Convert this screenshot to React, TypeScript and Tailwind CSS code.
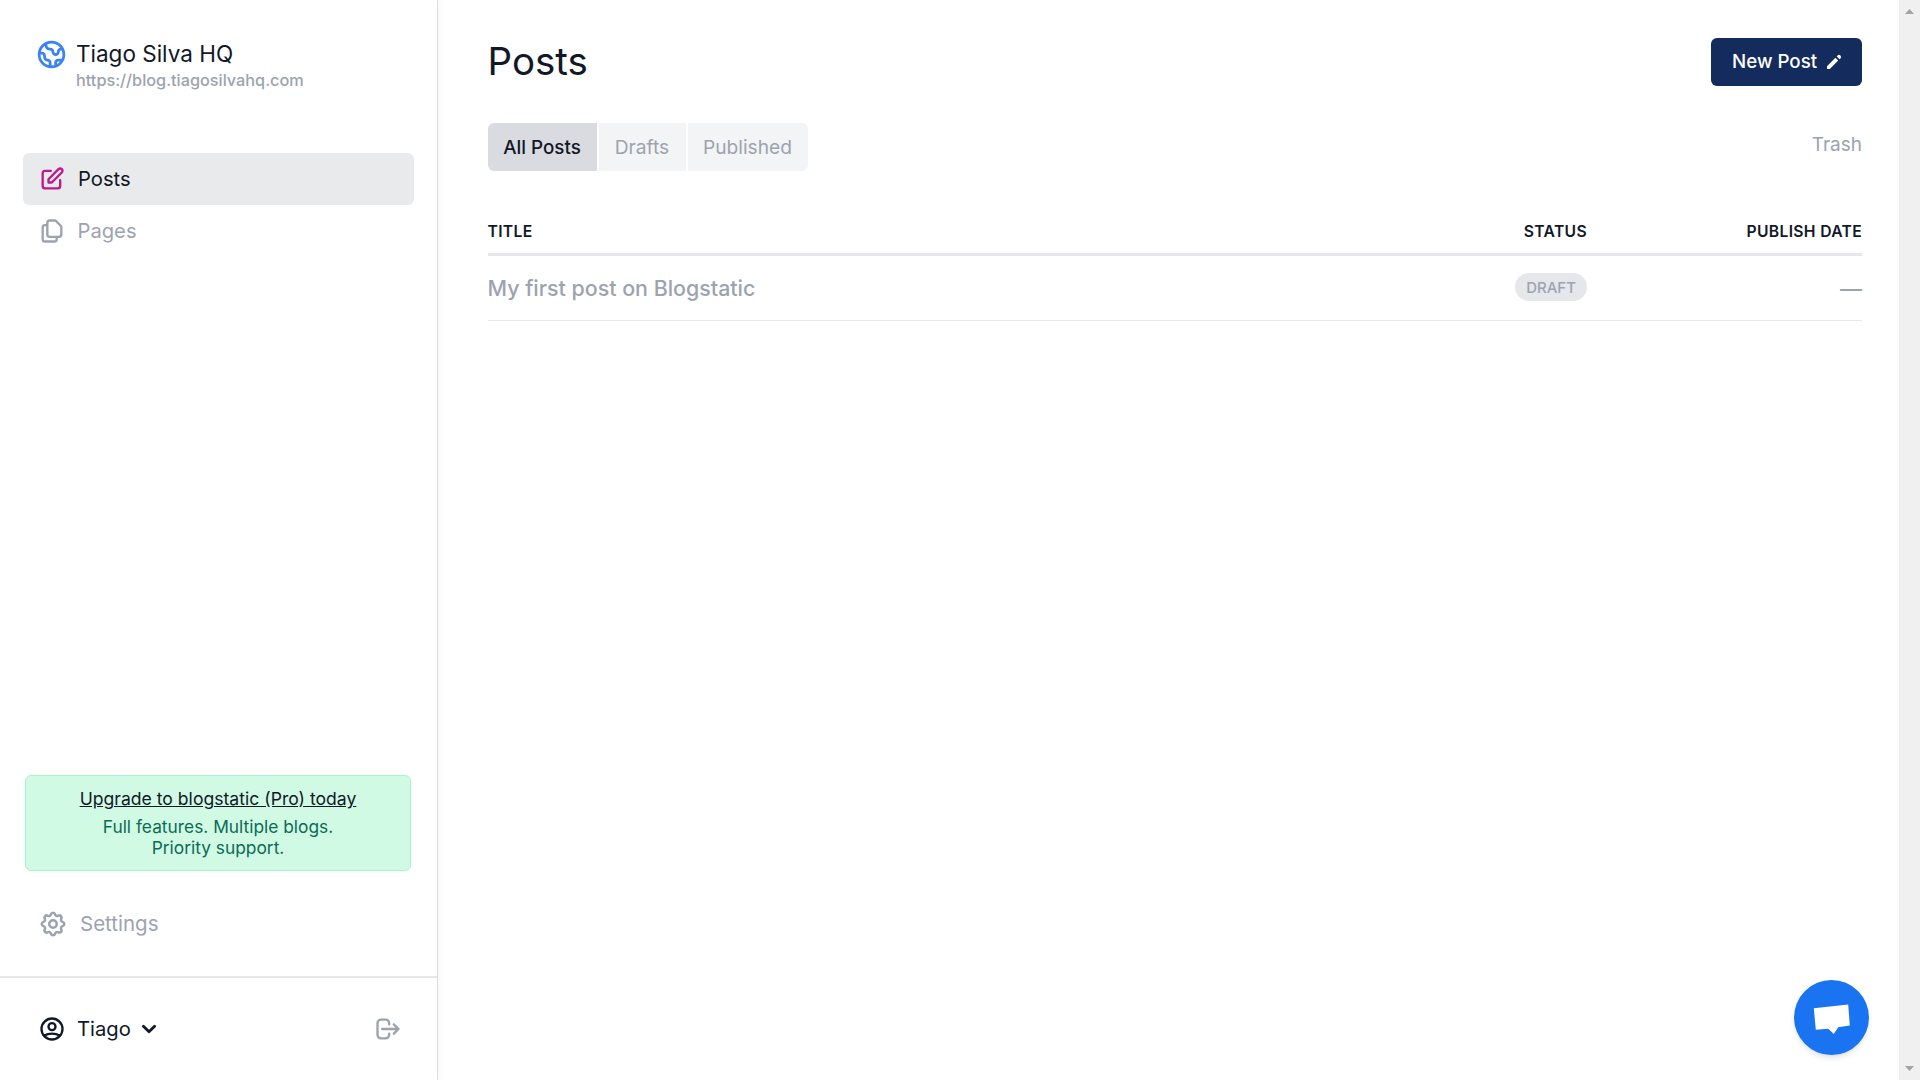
import { HiOutlineGlobe, HiOutlinePencilAlt, HiOutlineDocumentDuplicate, HiOutlineCog, HiOutlineUserCircle, HiOutlineLogout, HiChevronDown, HiPencil } from 'react-icons/hi';

const Sidebar = () => (
  <aside className="w-[438px] shrink-0 h-full flex flex-col border-r border-[#d9dbdf] shadow-[2px_0_6px_rgba(0,0,0,0.03)]">
    <div className="flex items-start pl-[35px] pt-[38px] h-[153px]">
      <HiOutlineGlobe size={33} className="text-[#3b82f6] shrink-0" />
      <div className="ml-[8px]">
        <div className="text-[22.5px] leading-[32px] text-[#111827]">Tiago Silva HQ</div>
        <div className="text-[16.25px] leading-[20px] font-medium text-[#9ca3af]">https://blog.tiagosilvahq.com</div>
      </div>
    </div>

    <nav className="pl-[23px] pr-[23px]">
      <a className="flex items-center h-[52px] pl-[15px] rounded-md bg-[#e9eaec] text-[#111827]">
        <HiOutlinePencilAlt size={28} className="text-[#be1a8f]" />
        <span className="ml-[12px] text-[20.2px]">Posts</span>
      </a>
      <a className="flex items-center h-[52px] pl-[15px] text-[#9ca3af]">
        <HiOutlineDocumentDuplicate size={28} />
        <span className="ml-[11.5px] text-[20.2px]">Pages</span>
      </a>
    </nav>

    <div className="flex-1" />

    <div className="ml-[25px] mr-[26px] h-[96px] rounded-md border border-[#a7f3d0] bg-[#d1fae5] text-center text-[17.6px] leading-[21px] pt-[12px]">
      <a className="underline text-[#111827]">Upgrade to blogstatic (Pro) today</a>
      <div className="mt-[7px] text-[17.35px] text-[#0b6b55]">
        Full features. Multiple blogs.
        <br />
        Priority support.
      </div>
    </div>

    <div className="flex items-center h-[105px] pl-[38px] pt-[1px] text-[#9ca3af]">
      <HiOutlineCog size={30} />
      <span className="ml-[12px] text-[20.5px]">Settings</span>
    </div>

    <div className="flex items-center justify-between h-[104px] border-t-2 border-[#e5e7eb] pl-[38px] pr-[35px]">
      <div className="flex items-center text-[#111827]">
        <HiOutlineUserCircle size={28} />
        <span className="ml-[11px] text-[20.2px]">Tiago</span>
        <HiChevronDown size={28} className="ml-[4px]" />
      </div>
      <HiOutlineLogout size={28} className="text-[#9ca3af]" />
    </div>
  </aside>
);

const Main = () => (
  <main className="flex-1 h-full pl-[49.5px] pr-[37px] pt-[38px]">
    <div className="flex items-center justify-between h-[48px]">
      <h1 className="text-[38.5px] leading-[48px] -mt-[2px] text-[#111827]">Posts</h1>
      <button className="flex items-center h-[48px] w-[151px] pl-[21px] rounded-md bg-[#132b5d] text-white text-[18.75px] font-medium">
        New Post
        <HiPencil size={20} className="ml-[7px]" />
      </button>
    </div>

    <div className="flex items-start justify-between mt-[37px]">
      <div className="flex gap-[2px] text-[19.2px]">
        <a className="flex items-center justify-center h-[48px] w-[109px] pt-[2px] rounded-l-md bg-[#d9dbe0] font-medium text-[18.8px] text-[#111827]">All Posts</a>
        <a className="flex items-center justify-center h-[48px] w-[87px] bg-[#f3f4f6] text-[#9ca3af]">Drafts</a>
        <a className="flex items-center justify-center h-[48px] w-[120px] rounded-r-md bg-[#f3f4f6] text-[#9ca3af]">Published</a>
      </div>
      <a className="text-[19px] leading-[24px] mt-[10px] text-[#9ca3af]">Trash</a>
    </div>

    <div className="flex items-center mt-[47px] h-[38px] border-b-[3px] border-[#e5e7eb] pb-[7px] text-[15.7px] font-semibold text-[#111827] uppercase tracking-[0.02em]">
      <div className="flex-1">Title</div>
      <div className="w-[100px] text-right">Status</div>
      <div className="w-[275px] text-right">Publish date</div>
    </div>

    <div className="flex items-center h-[65px] border-b border-[#e5e7eb]">
      <div className="flex-1 text-[21.4px] font-medium text-[#9ca3af]">My first post on Blogstatic</div>
      <div className="w-[100px] flex justify-end -mt-[2px]">
        <span className="flex items-center h-[28px] px-[11px] pt-[2px] rounded-full bg-[#e5e7eb] text-[15px] font-medium text-[#9ca3af]">DRAFT</span>
      </div>
      <div className="w-[275px] pt-[2px] text-right text-[22px] font-medium text-[#9ca3af]">—</div>
    </div>
  </main>
);

const Scrollbar = () => (
  <div className="w-[21px] shrink-0 h-full bg-[#f0f0f0] flex flex-col items-center justify-between py-[9px]">
    <svg width="9" height="5" viewBox="0 0 9 5"><path d="M4.5 0L9 5H0z" fill="#a3a3a3" /></svg>
    <svg width="9" height="5" viewBox="0 0 9 5"><path d="M0 0h9L4.5 5z" fill="#a3a3a3" /></svg>
  </div>
);

export default function App() {
  return (
    <div className="flex h-screen w-full overflow-hidden bg-white font-['Inter',sans-serif]">
      <Sidebar />
      <Main />
      <Scrollbar />
      <button className="fixed right-[51px] bottom-[25px] flex items-center justify-center w-[75px] h-[75px] rounded-full bg-[#1a73f0] shadow-md">
        <svg width="38" height="32" viewBox="0 0 38 32">
          <path d="M.8 6.2L35.2 2.5l1.6 21-11.6 1.7L20.8 32l-5.6-5.2-12.4 1z" fill="#fff" />
        </svg>
      </button>
    </div>
  );
}
